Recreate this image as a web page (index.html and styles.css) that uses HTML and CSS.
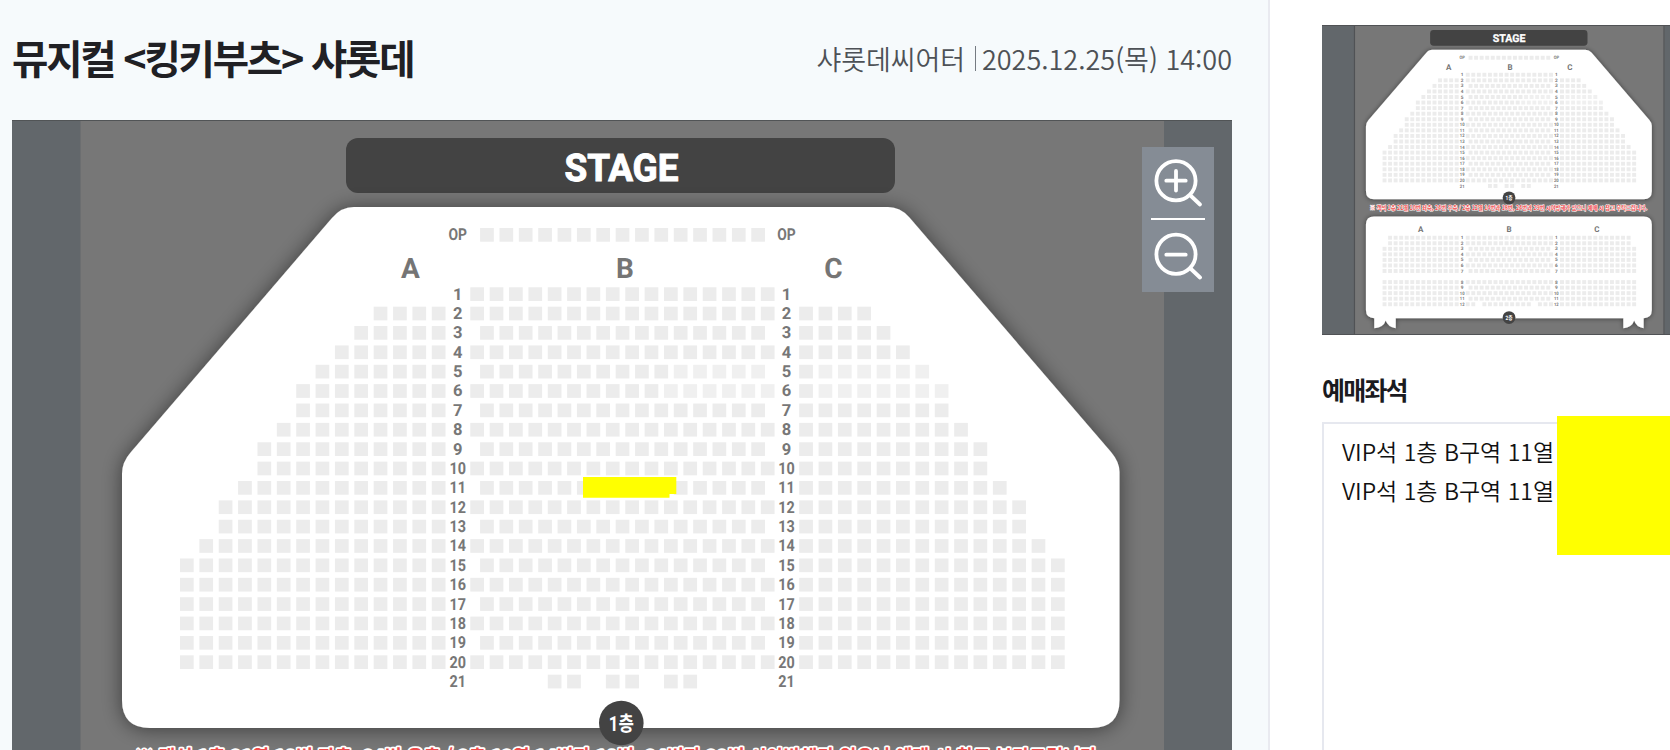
FILE: index.html
```html
<!DOCTYPE html>
<html lang="ko">
<head>
<meta charset="utf-8">
<title>예매좌석</title>
<link rel="stylesheet" href="styles.css">
</head>
<body>
<div class="page">
  <main class="booking">
    <header class="booking-head">
      <h1 class="title">뮤지컬 &lt;킹키부츠&gt; 샤롯데</h1>
      <p class="meta"><span class="venue">샤롯데씨어터</span><span class="bar"></span><span class="date">2025.12.25(목) 14:00</span></p>
    </header>
    <section class="map">
      <svg class="map-svg" viewBox="12 120 1220 630" preserveAspectRatio="xMinYMin slice">
        <defs>
          <filter id="shadow" x="-10%" y="-10%" width="120%" height="120%">
            <feDropShadow dx="0" dy="1" stdDeviation="10" flood-color="#000" flood-opacity=".5"/>
          </filter>
        </defs>
        <g id="hall">
          <rect class="floor" x="80.500" y="110" width="1083.500" height="1100"/>
          <rect class="stage" x="346" y="138" width="549" height="55" rx="12"/>
          <path class="panel" filter="url(#shadow)" d="M354 207H888Q900 207 909 217L1111 452Q1119.500 462 1119.500 472V700Q1119.500 728 1091.500 728H150Q122 728 122 700V474Q122 462 131 452L332 218Q341 207 354 207Z"/>
          <path class="panel" filter="url(#shadow)" d="M150 788H1091Q1119.500 788 1119.500 816V1114Q1119.500 1142 1091 1142V1177Q1064 1172 1058 1150Q1050 1174 1020 1177V1142H226V1177Q198 1172 191 1150Q184 1174 151 1177V1142Q122 1142 122 1114V816Q122 788 150 788Z"/>
          <text class="stage-text" x="621.500" y="180.500" textLength="114" lengthAdjust="spacingAndGlyphs">STAGE</text>
          <g id="seats"></g>
          <text class="section" x="410.500" y="277.500">A</text>
          <text class="section" x="625" y="277.500">B</text>
          <text class="section" x="833.500" y="277.500">C</text>
          <text class="section" x="313" y="841">A</text>
          <text class="section" x="621" y="841">B</text>
          <text class="section" x="928" y="841">C</text>
          <circle class="badge" cx="621.300" cy="723" r="22.300"/>
          <text class="badge-text" x="621.300" y="730.500" textLength="25" lengthAdjust="spacingAndGlyphs">1층</text>
          <circle class="badge" cx="621.300" cy="1140" r="22.300"/>
          <text class="badge-text" x="621.300" y="1148" textLength="25" lengthAdjust="spacingAndGlyphs">2층</text>
          <text class="notice" x="619" y="764" textLength="968" lengthAdjust="spacingAndGlyphs">※ 객석 1층 21열 10번 좌측, 24번 우측 / 2층 12열 14번과 18번, 24번과 29번 시야방해가 있으니 예매 시 참고 부탁드립니다.</text>
        </g>
        <path class="mark" d="M583 477H676.300V494H669.500V497.700H583Z"/>
      </svg>
      <div class="zoom">
        <svg class="zoom-icon" viewBox="0 0 72 72"><circle cx="34" cy="33.700" r="19.600"/><path d="M34 24V43.500M24.300 33.700H43.700M48.500 48.500L58 57.500"/></svg>
        <span class="zoom-line"></span>
        <svg class="zoom-icon" viewBox="0 0 72 72"><circle cx="34" cy="34.200" r="19.600"/><path d="M24.300 34.700H43.700M48.500 48.500L58 57.500"/></svg>
      </div>
    </section>
  </main>
  <aside class="side">
    <div class="mini">
      <svg class="mini-svg" viewBox="-31.300 120.800 1214.200 1079.900" preserveAspectRatio="none">
        <use href="#hall"/>
        <path class="mini-edge" d="M82 120V1202M1162 120V1202M-32 122.500H1184M-32 1199H1184"/>
      </svg>
    </div>
    <h2 class="side-title">예매좌석</h2>
    <ul class="seat-list">
      <li>VIP석 1층 B구역 11열</li>
      <li>VIP석 1층 B구역 11열</li>
      <li class="cover"></li>
    </ul>
  </aside>
</div>
<script src="seats.js"></script>
</body>
</html>
```
FILE: styles.css
```css
* { box-sizing: border-box; }
body {
  margin: 0;
  background: #fff;
  font-family: "Noto Sans CJK KR", "Noto Sans", sans-serif;
  overflow: hidden;
}
h1, h2, p, ul { margin: 0; padding: 0; }
.page { display: flex; width: 1670px; height: 750px; overflow: hidden; }

.booking {
  flex: 0 0 1270px;
  display: flex;
  flex-direction: column;
  padding: 0 36px 0 12px;
  background: #f6fafc;
  border-right: 2px solid #e9eaf0;
}
.booking-head {
  flex: 0 0 120px;
  display: flex;
  justify-content: space-between;
  align-items: center;
  padding-bottom: 3px;
}
.title {
  margin-top: -3px;
  color: #202024;
  font-size: 39.500px;
  font-weight: 700;
  line-height: 60px;
  letter-spacing: -2.200px;
  white-space: nowrap;
}
.meta {
  display: flex;
  align-items: center;
  color: #4d5156;
  font-size: 27px;
  line-height: 40px;
  font-weight: 350;
  white-space: nowrap;
}
.venue { letter-spacing: -.100px; }
.bar { width: 1px; height: 25px; margin: 0 6px 0 10px; background: #757b82; }

.map { position: relative; flex: 1; background: #62676b; overflow: hidden; border-top: 1px solid #515456; }
.map-svg { display: block; width: 1220px; height: 630px; margin-top: -1px; }
.floor { fill: #777; }
.stage, .badge { fill: #434343; }
.panel { fill: #fff; }
.seat { fill: #ececec; }
.seat-faint { fill: #f0f0f0; }
.stage-text, .section, .row-no, .badge-text { font-family: Roboto, "Noto Sans CJK KR", sans-serif; font-weight: 700; text-anchor: middle; text-rendering: geometricPrecision; }
.stage-text { font-size: 38px; fill: #fff; stroke: #fff; stroke-width: 1; }
.section { font-size: 28px; fill: #757575; }
.row-no { font-size: 16.500px; fill: #777; }
.badge-text { font-size: 21px; fill: #fff; }
.notice {
  font-family: "Noto Sans CJK KR", sans-serif;
  font-size: 19px;
  font-weight: 700;
  text-anchor: middle;
  fill: #ee4a4a;
  stroke: #fff;
  stroke-width: 3.500;
  stroke-linejoin: round;
  paint-order: stroke;
}
.mark { fill: #ff0; }

.zoom {
  position: absolute;
  top: 26px;
  right: 18px;
  width: 72px;
  height: 145px;
  background: #858c95;
}
.zoom-icon { display: block; width: 72px; height: 72px; fill: none; stroke: #fff; stroke-width: 3.800; stroke-linecap: round; }
.zoom-line { display: block; width: 54px; height: 2px; margin: -1px 0 0 9px; background: #fff; }

.side { flex: 1; min-width: 0; padding: 25px 0 0 52px; display: flex; flex-direction: column; }
.mini { flex: 0 0 310px; background: #62676b; }
.mini-svg { display: block; width: 348px; height: 310px; }
.mini-edge { fill: none; stroke: #505255; stroke-width: 4; }
.side-title {
  margin-top: 36px;
  color: #1b1b1f;
  font-size: 25px;
  line-height: 36px;
  font-weight: 700;
  letter-spacing: -1.800px;
}
.seat-list {
  position: relative;
  flex: 1;
  margin-top: 15px;
  padding: 8px 0 0 18px;
  border: solid #e6e8ef;
  border-width: 2px 0 0 2px;
  list-style: none;
  color: #111;
  font-size: 23px;
  line-height: 39px;
  font-weight: 350;
  white-space: nowrap;
}
.cover { position: absolute; left: 233px; top: -8px; width: 120px; height: 139px; background: #ff0; }
```
FILE: seats.js
```js
const NS = "http://www.w3.org/2000/svg";
const PITCH = 19.37;
const seats = document.getElementById("seats");

function seat(x, y, faint) {
  const r = document.createElementNS(NS, "rect");
  r.setAttribute("class", faint ? "seat seat-faint" : "seat");
  r.setAttribute("x", x);
  r.setAttribute("y", y);
  r.setAttribute("width", 13.7);
  r.setAttribute("height", 13.7);
  seats.append(r);
}

function label(text, y) {
  [457.7, 786.4].forEach((x) => {
    const t = document.createElementNS(NS, "text");
    t.setAttribute("class", "row-no");
    t.setAttribute("x", x);
    t.setAttribute("y", y + 12.3);
    if (text.length > 1) {
      t.setAttribute("textLength", text === "OP" ? 18.5 : 16.5);
      t.setAttribute("lengthAdjust", "spacingAndGlyphs");
    }
    t.textContent = text;
    seats.append(t);
  });
}

function centre(y, wide, faint, skip = []) {
  const n = wide ? 16 : 15;
  for (let i = 0; i < n; i++) {
    if (!skip.includes(i)) seat((wide ? 470.3 : 480.1) + i * PITCH, y, faint && i > 9);
  }
}

function wings(y, count, faint) {
  for (let i = 0; i < count; i++) {
    seat(431.8 - i * PITCH, y, false);
    seat(799.2 + i * PITCH, y, faint && i > 0);
  }
}

label("OP", 228);
centre(228, false, false);

const wingSeats = [0, 4, 5, 6, 7, 8, 8, 9, 10, 10, 11, 12, 12, 13, 14, 14, 14, 14, 14, 14, 0];
wingSeats.forEach((count, i) => {
  const row = i + 1;
  const y = 287.3 + i * PITCH;
  const faint = row === 5 || row === 6;
  label(String(row), y);
  wings(y, count, faint);
  if (row === 21) centre(y, true, false, [0, 1, 2, 3, 6, 9, 12, 13, 14, 15]);
  else centre(y, row === 1 || row % 2 === 0, faint);
});

for (let row = 1; row <= 12; row++) {
  const y = row < 8 ? 855 + (row - 1) * 19.3 : 1009.5 + (row - 8) * 19.3;
  label(String(row), y);
  wings(y, row < 3 ? 13 : 14, false);
  centre(y, row === 1 || row % 2 === 0, false, row === 12 ? [2, 12] : []);
}
```
